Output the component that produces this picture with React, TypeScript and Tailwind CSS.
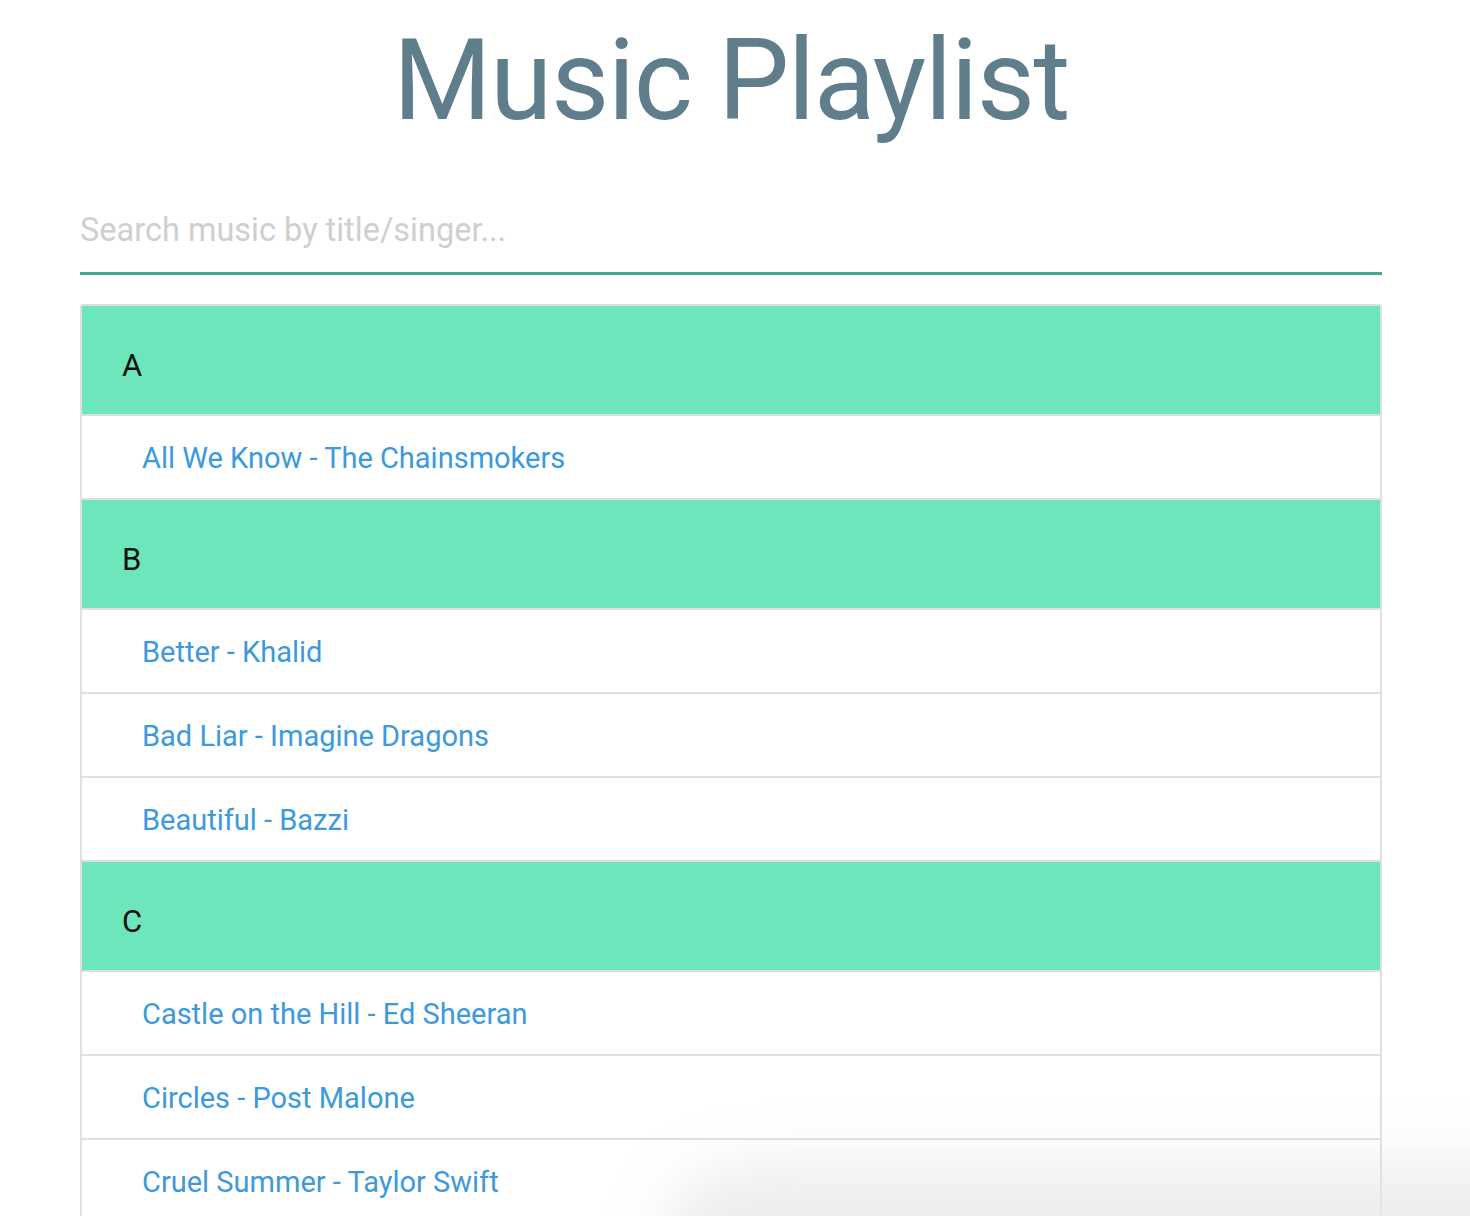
const groups = [
  { letter: "A", songs: ["All We Know - The Chainsmokers"] },
  { letter: "B", songs: ["Better - Khalid", "Bad Liar - Imagine Dragons", "Beautiful - Bazzi"] },
  {
    letter: "C",
    songs: ["Castle on the Hill - Ed Sheeran", "Circles - Post Malone", "Cruel Summer - Taylor Swift"],
  },
];

const App = () => {
  return (
    <div className="relative min-h-screen overflow-hidden bg-white font-['Roboto','Liberation_Sans',sans-serif]">
      <div className="ml-[80px] w-[1302px]">
        <h1 className="pt-[16px] text-center text-[113px] leading-[130px] tracking-[-1.5px] text-[#607d8b]">
          Music Playlist
        </h1>

        <div className="mt-[54px]">
          <input
            type="text"
            placeholder="Search music by title/singer..."
            className="w-full h-[75px] pb-[13px] border-b-[3px] border-[#4da495] bg-transparent text-[32.5px] text-gray-700 outline-none placeholder:text-[#cfcfcf]"
          />
        </div>

        <div className="mt-[29px] rounded-[3px] border-2 border-[#dfdfdf]">
          {groups.map((g) => (
            <div key={g.letter}>
              <div className="flex h-[110px] items-center border-b-2 border-[#dfdfdf] bg-[#6ee6bb] pl-[40px] pt-[12px] text-[31px] text-[#111]">
                {g.letter}
              </div>
              {g.songs.map((s) => (
                <div
                  key={s}
                  className="flex h-[84px] items-center border-b-2 border-[#dfdfdf] pl-[60px] pt-[4px] text-[29px] text-[#3c99de]"
                >
                  {s}
                </div>
              ))}
            </div>
          ))}
        </div>
      </div>

      {/* window shadow bleeding in at the bottom right */}
      <div className="pointer-events-none absolute left-[660px] top-[1165px] h-[300px] w-[1000px] rounded-[90px] bg-[#e6e6e6] opacity-70 blur-[28px]" />
    </div>
  );
};

export default App;
